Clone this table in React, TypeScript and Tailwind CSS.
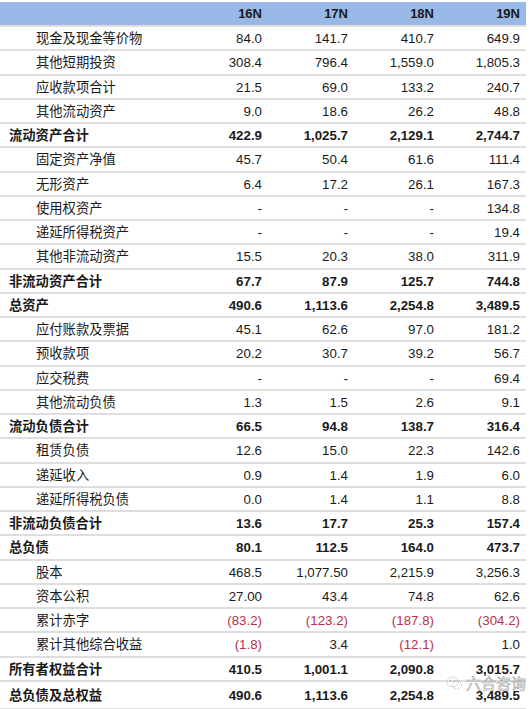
import React from "react";

type Row = { label: string; vals: string[]; bold?: boolean };

const rows: Row[] = [
  { label: "现金及现金等价物", vals: ["84.0", "141.7", "410.7", "649.9"] },
  { label: "其他短期投资", vals: ["308.4", "796.4", "1,559.0", "1,805.3"] },
  { label: "应收款项合计", vals: ["21.5", "69.0", "133.2", "240.7"] },
  { label: "其他流动资产", vals: ["9.0", "18.6", "26.2", "48.8"] },
  { label: "流动资产合计", vals: ["422.9", "1,025.7", "2,129.1", "2,744.7"], bold: true },
  { label: "固定资产净值", vals: ["45.7", "50.4", "61.6", "111.4"] },
  { label: "无形资产", vals: ["6.4", "17.2", "26.1", "167.3"] },
  { label: "使用权资产", vals: ["-", "-", "-", "134.8"] },
  { label: "递延所得税资产", vals: ["-", "-", "-", "19.4"] },
  { label: "其他非流动资产", vals: ["15.5", "20.3", "38.0", "311.9"] },
  { label: "非流动资产合计", vals: ["67.7", "87.9", "125.7", "744.8"], bold: true },
  { label: "总资产", vals: ["490.6", "1,113.6", "2,254.8", "3,489.5"], bold: true },
  { label: "应付账款及票据", vals: ["45.1", "62.6", "97.0", "181.2"] },
  { label: "预收款项", vals: ["20.2", "30.7", "39.2", "56.7"] },
  { label: "应交税费", vals: ["-", "-", "-", "69.4"] },
  { label: "其他流动负债", vals: ["1.3", "1.5", "2.6", "9.1"] },
  { label: "流动负债合计", vals: ["66.5", "94.8", "138.7", "316.4"], bold: true },
  { label: "租赁负债", vals: ["12.6", "15.0", "22.3", "142.6"] },
  { label: "递延收入", vals: ["0.9", "1.4", "1.9", "6.0"] },
  { label: "递延所得税负债", vals: ["0.0", "1.4", "1.1", "8.8"] },
  { label: "非流动负债合计", vals: ["13.6", "17.7", "25.3", "157.4"], bold: true },
  { label: "总负债", vals: ["80.1", "112.5", "164.0", "473.7"], bold: true },
  { label: "股本", vals: ["468.5", "1,077.50", "2,215.9", "3,256.3"] },
  { label: "资本公积", vals: ["27.00", "43.4", "74.8", "62.6"] },
  { label: "累计赤字", vals: ["(83.2)", "(123.2)", "(187.8)", "(304.2)"] },
  { label: "累计其他综合收益", vals: ["(1.8)", "3.4", "(12.1)", "1.0"] },
  { label: "所有者权益合计", vals: ["410.5", "1,001.1", "2,090.8", "3,015.7"], bold: true },
  { label: "总负债及总权益", vals: ["490.6", "1,113.6", "2,254.8", "3,489.5"], bold: true },
];

const font = { fontFamily: '"Liberation Sans", Arial, "Noto Sans CJK SC", sans-serif' };

export default function App() {
  return (
    <div className="relative w-[531px] h-[709px] bg-white text-[#1a1a1a]" style={font}>
      <div className="w-[526px] pt-[2px]">
        <div className="flex h-[23px] bg-[#98b9e6] items-center text-[13px] font-bold">
          <div className="w-[182px]" />
          {["16N", "17N", "18N", "19N"].map((h) => (
            <div key={h} className="w-[86px] text-right pr-[6px]">
              {h}
            </div>
          ))}
        </div>
        {rows.map((r, i) => (
          <div
            key={i}
            className={`flex items-center h-[24.25px] pt-[2px] border-t-2 border-[#dedede] text-[13.3px] ${
              i === rows.length - 1 ? "box-content border-b-2" : ""
            } ${r.bold ? "font-bold" : ""}`}
          >
            <div className={`w-[182px] ${r.bold ? "pl-[9px]" : "pl-[36px]"}`}>{r.label}</div>
            {r.vals.map((v, j) => (
              <div
                key={j}
                className={`w-[86px] text-right pr-[6px] ${v.startsWith("(") ? "text-[#b8304a]" : ""}`}
              >
                {v}
              </div>
            ))}
          </div>
        ))}
      </div>
      <div className="absolute left-[446px] top-[673px] flex items-center gap-[3px] whitespace-nowrap pointer-events-none opacity-80">
        <svg width="17" height="15" viewBox="0 0 17 15" fill="none" stroke="#b0b0b0" strokeWidth="1">
          <ellipse cx="6.5" cy="6" rx="5.8" ry="4.8" strokeDasharray="1.5 1" />
          <ellipse cx="11" cy="9" rx="4.6" ry="3.8" strokeDasharray="1.5 1" />
          <circle cx="4.5" cy="5" r="0.6" fill="#b0b0b0" />
          <circle cx="8.5" cy="5" r="0.6" fill="#b0b0b0" />
        </svg>
        <span
          className="text-[15px] leading-[20px] text-white whitespace-nowrap"
          style={{ WebkitTextStroke: "0.7px #9a9a9a", fontFamily: '"Noto Sans CJK SC", sans-serif' }}
        >
          六合咨询
        </span>
      </div>
    </div>
  );
}
